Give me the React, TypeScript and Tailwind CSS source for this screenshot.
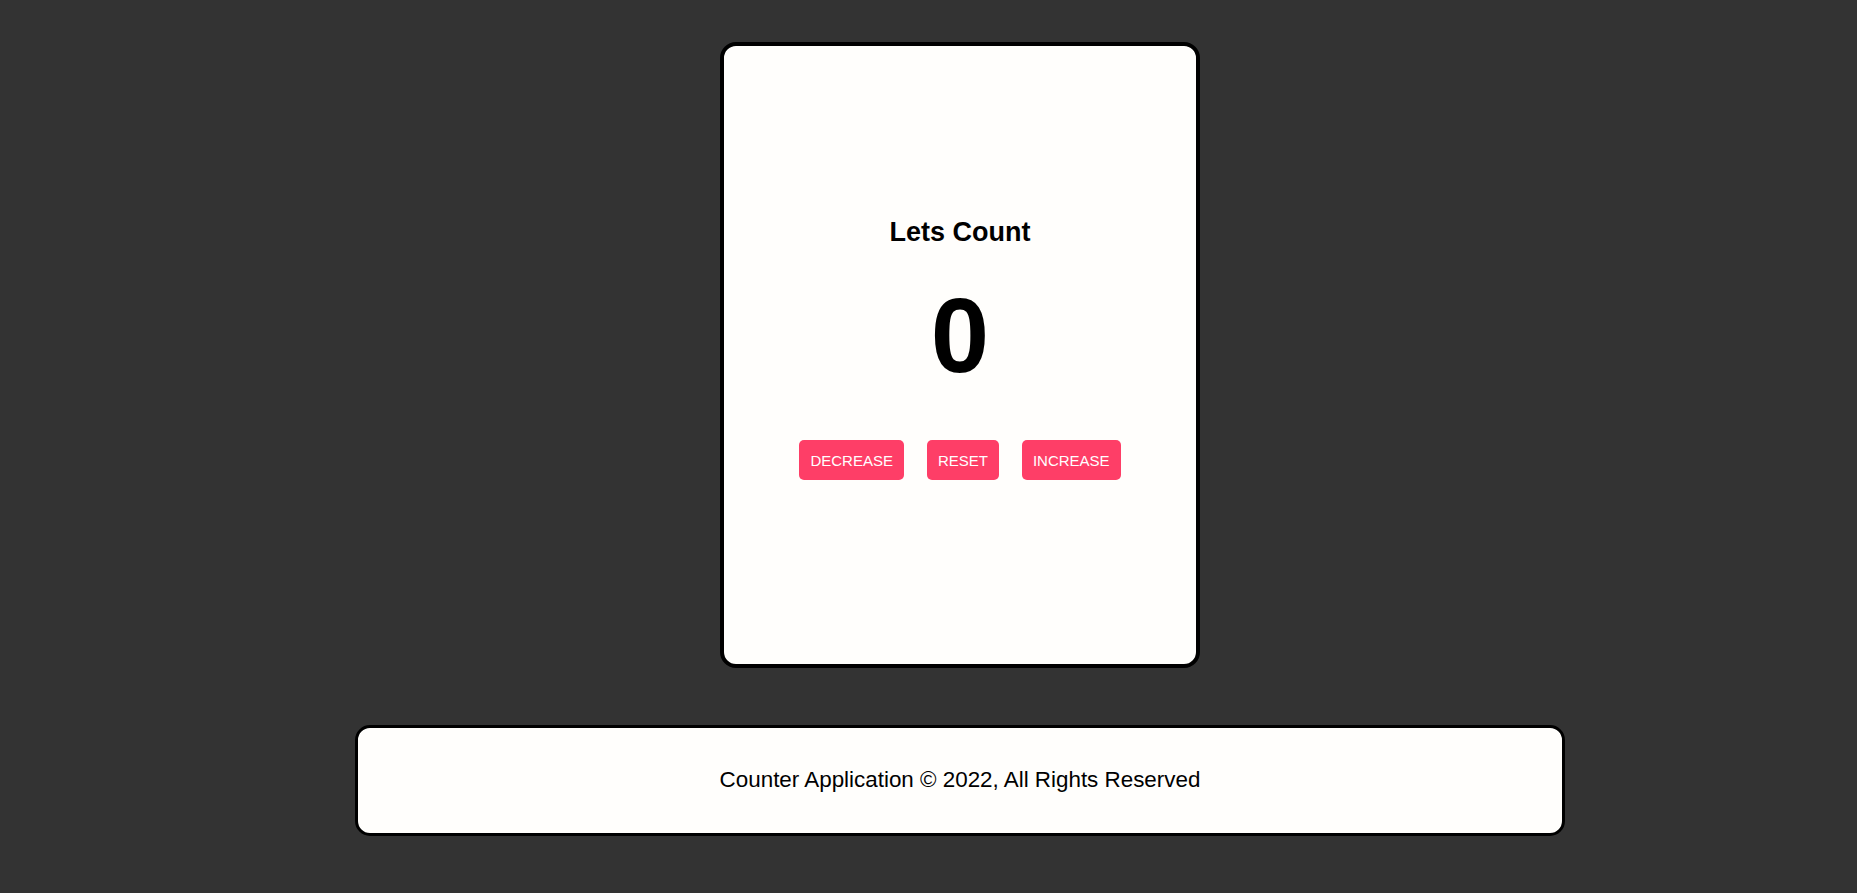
import { useState } from "react";

export default function App() {
  const [count, setCount] = useState(0);

  const buttons = [
    { label: "DECREASE", onClick: () => setCount((c) => c - 1) },
    { label: "RESET", onClick: () => setCount(0) },
    { label: "INCREASE", onClick: () => setCount((c) => c + 1) },
  ];

  return (
    <div
      className="min-h-screen overflow-hidden bg-[#333333] text-black"
      style={{ fontFamily: "'Liberation Sans', Arial, sans-serif" }}
    >
      <div className="w-[1920px] pt-[42px] pb-[57px] flex flex-col items-center">
        {/* Counter card */}
        <div className="w-[480px] h-[626px] bg-[#fffefc] border-4 border-black rounded-[16px] flex flex-col items-center pt-[171px]">
          <h2 className="text-[27px] leading-[31px] font-bold">Lets Count</h2>
          <div className="mt-[35px] text-[105px] leading-none font-bold">{count}</div>
          <div className="mt-[52px] flex gap-[23px]">
            {buttons.map((b) => (
              <button
                key={b.label}
                onClick={b.onClick}
                className="h-[40px] px-[11px] rounded-[5px] bg-[#fe3e67] text-white text-[15px] leading-none"
              >
                {b.label}
              </button>
            ))}
          </div>
        </div>

        {/* Footer */}
        <footer className="mt-[57px] w-[1210px] h-[111px] bg-[#fffefc] border-[3px] border-black rounded-[15px] flex items-center justify-center pb-[2px]">
          <p className="text-[22.4px]">Counter Application © 2022, All Rights Reserved</p>
        </footer>
      </div>
    </div>
  );
}
